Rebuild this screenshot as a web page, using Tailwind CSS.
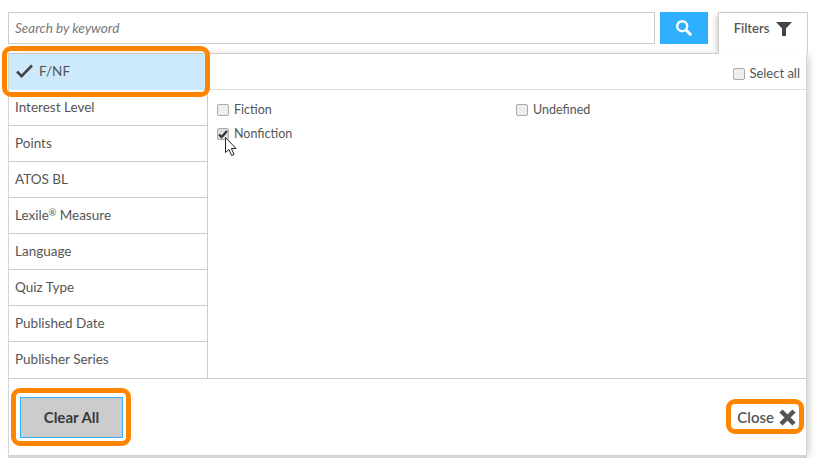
<!DOCTYPE html>
<html lang="en">
<head>
<meta charset="UTF-8">
<title>Filters</title>
<script src="https://cdn.jsdelivr.net/npm/@tailwindcss/browser@4"></script>
</head>
<body class="bg-white">
<div class="relative w-[822px] h-[458px] overflow-hidden bg-white font-['Lato',sans-serif] text-[13.5px] text-[#555]">

  <!-- search row -->
  <div class="flex items-start pl-[8px] pt-[12px] h-[53px]">
    <div class="w-[647px] h-[32px] border border-[#ccc] bg-white pl-[6px] leading-[30px] italic text-[#777]">Search by keyword</div>
    <button class="ml-[5px] w-[48px] h-[32px] bg-[#2fb0ff] flex items-center justify-center">
      <svg width="18" height="18" viewBox="0 0 18 18" fill="none" stroke="white"><circle cx="7.2" cy="7.2" r="5" stroke-width="2.4"/><path d="M11 11l5.2 5.2" stroke-width="3"/></svg>
    </button>
    <div class="relative z-10 ml-[10px] w-[90px] h-[42px] border border-b-0 border-[#ccc] bg-white flex items-start justify-center pt-[6px] font-semibold text-[13px] text-[#555] shadow-[-5px_0_5px_-3px_rgba(0,0,0,0.18)]">
      <span>Filters</span>
      <svg class="ml-[7px] mt-[3px]" width="16" height="14" viewBox="0 0 16 14" fill="#444"><path d="M0 0h16L10 6.5V14H6V6.5z"/></svg>
    </div>
  </div>

  <!-- panel -->
  <div class="relative ml-[8px] w-[799px] h-[405px] border-x border-b-[3px] border-[#d4d4d4] bg-white shadow-[4px_0_8px_-2px_rgba(0,0,0,0.2)]">
    <div class="flex h-[326px] border-b border-[#ccc]">
      <div class="w-[199px] shrink-0 border-r border-[#ccc] border-t border-t-[#ccc]">
        <div class="h-[36px] bg-[#cdeafd] flex items-center pl-[7px] pb-[2px] text-[#555]">
          <svg width="17" height="14" viewBox="0 0 17 14" fill="none" stroke="#444" stroke-width="2.6"><path d="M1 7.5l4.6 4.6L16 1.5"/></svg>
          <span class="ml-[6px]">F/NF</span>
        </div>
        <div class="h-[36px] border-b border-[#ccc] pl-[6px] leading-[34px]">Interest Level</div>
        <div class="h-[36px] border-b border-[#ccc] pl-[6px] leading-[34px]">Points</div>
        <div class="h-[36px] border-b border-[#ccc] pl-[6px] leading-[34px]">ATOS BL</div>
        <div class="h-[36px] border-b border-[#ccc] pl-[6px] leading-[34px]">Lexile<sup class="text-[9px]">®</sup> Measure</div>
        <div class="h-[36px] border-b border-[#ccc] pl-[6px] leading-[34px]">Language</div>
        <div class="h-[36px] border-b border-[#ccc] pl-[6px] leading-[34px]">Quiz Type</div>
        <div class="h-[36px] border-b border-[#ccc] pl-[6px] leading-[34px]">Published Date</div>
        <div class="h-[36px] pl-[6px] leading-[34px]">Publisher Series</div>
      </div>
      <div class="flex-1 border-t border-[#ccc]">
        <div class="h-[36px] border-b border-[#ddd] flex items-end justify-end pr-[6px] pb-[8px] text-[13px]">
          <span class="w-[12px] h-[12px] rounded-[2px] border border-[#aaa] bg-[#eee] mr-[4px] mb-[1px]"></span>
          <span class="leading-[15px]">Select all</span>
        </div>
        <div class="grid grid-cols-[299px_1fr] pl-[9px] pt-[12px] gap-y-[8px] text-[12.5px] leading-[16px]">
          <div class="flex items-center"><span class="w-[12px] h-[12px] rounded-[2px] border border-[#aaa] bg-[#eee] mr-[5px]"></span>Fiction</div>
          <div class="flex items-center"><span class="w-[12px] h-[12px] rounded-[2px] border border-[#aaa] bg-[#eee] mr-[5px]"></span>Undefined</div>
          <div class="flex items-center">
            <span class="w-[12px] h-[12px] rounded-[2px] border border-[#aaa] bg-[#ddd] mr-[5px] flex items-center justify-center">
              <svg width="10" height="9" viewBox="0 0 10 9" fill="none" stroke="#333" stroke-width="2.2"><path d="M1 4.5l2.6 2.6L9 1"/></svg>
            </span>Nonfiction
          </div>
        </div>
      </div>
    </div>
    <div class="flex items-center justify-between h-[76px] pl-[11px] pr-[10px]">
      <button class="w-[103px] h-[41px] bg-[#ccc] border border-[#33b0ff] font-bold text-[15px] text-[#3a3a3a]">Clear All</button>
      <div class="flex items-center text-[15px] font-semibold text-[#555]">
        Close
        <svg class="ml-[5px]" width="17" height="17" viewBox="0 0 17 17" fill="none" stroke="#555" stroke-width="4.5"><path d="M2 2l13 13M15 2L2 15"/></svg>
      </div>
    </div>
  </div>

  <!-- mouse pointer -->
  <svg class="absolute left-[225px] top-[137px]" width="13" height="20" viewBox="0 0 13 20" fill="white" stroke="#222"><path d="M.5.5v15l3.5-3 2.6 6 2.4-1-2.6-6h4.6z"/></svg>

  <!-- orange callouts -->
  <div class="absolute left-[2px] top-[46px] w-[208px] h-[51px] border-[5px] border-[#ff8400] rounded-[9px]"></div>
  <div class="absolute left-[11px] top-[388px] w-[120px] h-[58px] border-[5px] border-[#ff8400] rounded-[9px]"></div>
  <div class="absolute left-[726px] top-[399px] w-[78px] h-[35px] border-[5px] border-[#ff8400] rounded-[9px]"></div>
</div>
</body>
</html>
